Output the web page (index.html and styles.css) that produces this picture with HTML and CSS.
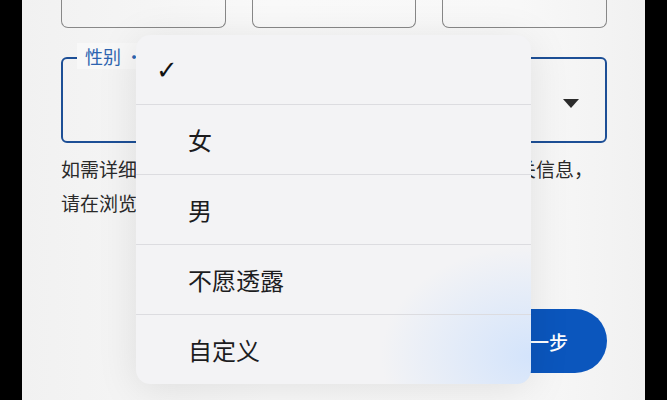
FILE: index.html
```html
<!DOCTYPE html>
<html lang="zh-CN">
<head>
    <meta charset="UTF-8">
    <meta name="viewport" content="width=device-width, initial-scale=1.0">
    <title>性别</title>
    <link rel="stylesheet" href="styles.css">
</head>
<body>
    <div class="screen">
        <div class="boxes">
            <div class="box"></div>
            <div class="box"></div>
            <div class="box"></div>
        </div>

        <div class="field">
            <span class="field-label">性别 ·</span>
            <span class="arrow"></span>
        </div>

        <p class="hint">如需详细了解我们在账号中如何使用和保护您的这些相关信息，请在浏览器中查看隐私权政策。</p>

        <div class="actions">
            <button class="next">下一步</button>
        </div>

        <!-- 下拉菜单 -->
        <ul class="menu">
            <li class="menu-item"><span class="check">✓</span></li>
            <li class="menu-item">女</li>
            <li class="menu-item">男</li>
            <li class="menu-item">不愿透露</li>
            <li class="menu-item">自定义</li>
        </ul>
    </div>
</body>
</html>
```

FILE: styles.css
```css
html, body {
    margin: 0;
    height: 100%;
    background: #000;
    overflow: hidden;
}
.screen {
    position: relative;
    width: 623px;
    height: 400px;
    margin: 0 auto 0 22px;
    padding: 0 38px 0 39px;
    box-sizing: border-box;
    background: linear-gradient(90deg, #f1f1f1 0%, #f9f9f9 40%, #f8f8f8 80%, #f1f1f1 100%);
    font-family: "Noto Sans CJK SC", "Noto Sans", sans-serif;
}
.boxes {
    display: grid;
    grid-template-columns: repeat(3, 1fr);
    gap: 26px;
}
.box {
    height: 27px;
    border: 1.5px solid #888;
    border-top: none;
    border-radius: 0 0 7px 7px;
}
.field {
    position: relative;
    height: 82px;
    margin-top: 29px;
    border: 2px solid #1d4f96;
    border-radius: 6px;
}
.field-label {
    position: absolute;
    left: 14px;
    top: -16px;
    padding: 0 8px;
    background: #f8f8f8;
    color: #2d64b0;
    font-size: 18px;
    line-height: 26px;
}
.arrow {
    position: absolute;
    right: 26px;
    top: 40px;
    border-left: 8px solid transparent;
    border-right: 8px solid transparent;
    border-top: 9px solid #2b2b2b;
}
.hint {
    margin: 9px 0 0;
    color: #2a2a2a;
    font-size: 19px;
    line-height: 34px;
}
.actions {
    display: flex;
    justify-content: flex-end;
    margin-top: 89px;
}
.next {
    width: 136px;
    height: 64px;
    border: none;
    border-radius: 32px;
    background: #0b56bd;
    color: #fff;
    font-family: inherit;
    font-size: 19px;
    font-weight: 500;
    text-align: left;
    padding-left: 40px;
}
.menu {
    position: absolute;
    left: 114px;
    top: 35px;
    width: 395px;
    margin: 0;
    padding: 0;
    list-style: none;
    border-radius: 14px;
    overflow: hidden;
    background:
        radial-gradient(ellipse 150px 110px at 100% 92%, rgba(208, 226, 252, 0.9), rgba(220, 233, 252, 0) 100%),
        #f3f3f5;
    box-shadow: 0 6px 40px rgba(0, 0, 0, 0.10);
}
.menu-item {
    height: 69px;
    display: flex;
    align-items: center;
    padding-left: 52px;
    border-top: 1px solid #dcdce0;
    color: #1c1c1e;
    font-size: 24px;
}
.menu-item:first-child {
    border-top: none;
    height: 69px;
}
.check {
    margin-left: -32px;
    font-family: "DejaVu Sans", sans-serif;
    font-size: 26px;
    font-weight: bold;
    color: #111;
}
```
